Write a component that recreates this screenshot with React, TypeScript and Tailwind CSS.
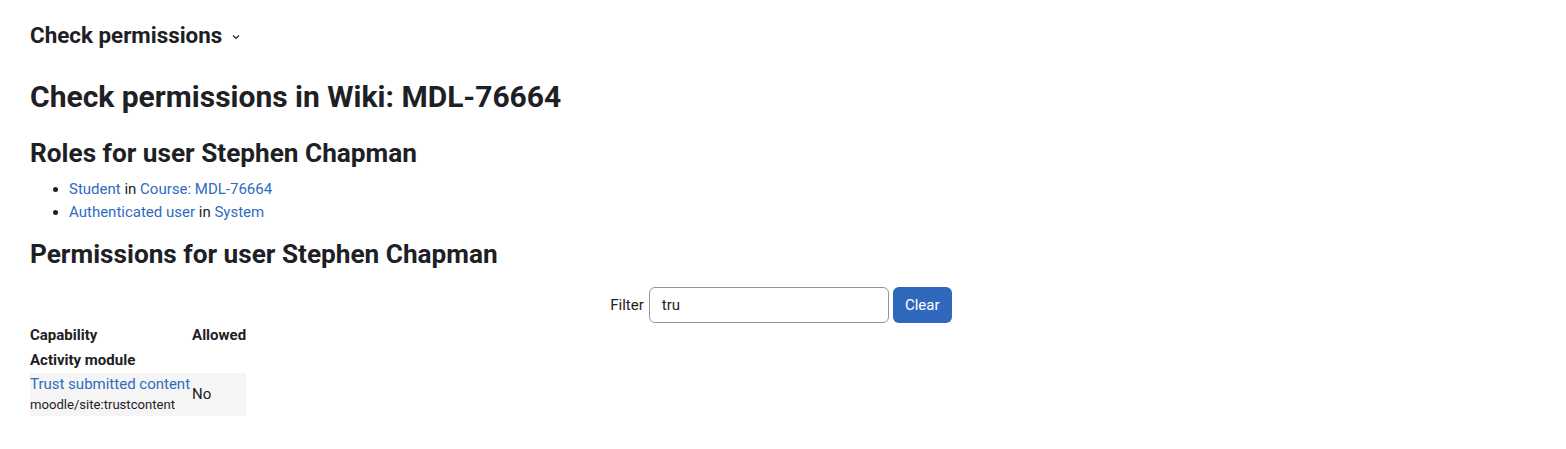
export default function App() {
  return (
    <div
      className="min-h-screen bg-white px-[30px] pt-[22px] text-[15px] leading-normal text-[#1d2125]"
      style={{ fontFamily: 'Roboto, "Liberation Sans", sans-serif' }}
    >
      {/* Page action selector */}
      <div className="flex items-center gap-[9px]">
        <h4 className="text-[22.4px] font-bold leading-[26px]">Check permissions</h4>
        <svg width="10" height="10" viewBox="0 0 10 10" fill="none" stroke="#1d2125" strokeWidth="1.2" className="mt-[4px]">
          <path d="M2 3.5 5 6.5 8 3.5" />
        </svg>
      </div>

      <h2 className="mt-[32px] text-[30px] font-bold leading-[34px]">Check permissions in Wiki: MDL-76664</h2>

      <h3 className="mt-[25px] text-[26.2px] font-bold leading-[29px]">Roles for user Stephen Chapman</h3>
      <ul className="mt-[10px] list-disc pl-[39px] text-[15px] leading-[23px]">
        <li>
          <a className="text-[#2f6bc0]">Student</a> in <a className="text-[#2f6bc0]">Course: MDL-76664</a>
        </li>
        <li>
          <a className="text-[#2f6bc0]">Authenticated user</a> in <a className="text-[#2f6bc0]">System</a>
        </li>
      </ul>

      <h3 className="mt-[16px] text-[26.2px] font-bold leading-[29px]">Permissions for user Stephen Chapman</h3>

      <div className="mt-[18px] flex items-center justify-center gap-[4px] pr-[4px] text-[15px]">
        <label className="mr-[1px]">Filter</label>
        <input
          readOnly
          value="tru"
          className="h-[36px] w-[240px] rounded-[6px] border border-[#8f959e] px-[12px] text-[15px] text-[#1d2125] outline-none"
        />
        <button className="h-[36px] w-[59px] rounded-[6px] bg-[#3068bd] text-[15px] text-white">Clear</button>
      </div>

      <table className="text-[15px]">
        <thead>
          <tr className="h-[25px]">
            <th className="text-left font-bold">Capability</th>
            <th className="pl-[2px] text-left font-bold">Allowed</th>
          </tr>
        </thead>
        <tbody>
          <tr className="h-[25px]">
            <th colSpan={2} className="text-left font-bold">Activity module</th>
          </tr>
          <tr className="bg-[#f5f5f5]">
            <td className="pb-[1px]">
              <a className="block leading-[22px] text-[#2f6bc0]">Trust submitted content</a>
              <div className="text-[13.1px] leading-[20px]">moodle/site:trustcontent</div>
            </td>
            <td className="pl-[2px]">No</td>
          </tr>
        </tbody>
      </table>
    </div>
  );
}
